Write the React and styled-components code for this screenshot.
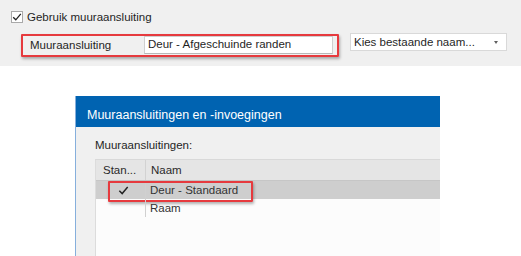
import styled, { createGlobalStyle } from 'styled-components';

const GlobalStyle = createGlobalStyle`
    html, body {
        margin: 0;
        padding: 0;
        background: #fff;
    }
    body {
        font-family: "Liberation Sans", Arial, sans-serif;
        font-size: 11.5px;
        color: #1f1f1f;
    }
`;

const red = '#e63a3e';

function CheckIcon({size = 10}) {
    return (
        <svg width={size} height={size} viewBox="0 0 10 10">
            <path d="M1.2 5.2 L3.8 7.8 L8.8 1.8" fill="none" stroke="#222" strokeWidth="1.3" />
        </svg>
    );
}

function App() {
    const rows = [
        {checked: true, name: 'Deur - Standaard', selected: true},
        {checked: false, name: 'Raam', selected: false},
    ];

    return (
        <Page>
            <GlobalStyle />
            <TopPanel>
                <CheckRow>
                    <CheckBox><CheckIcon /></CheckBox>
                    <span>Gebruik muuraansluiting</span>
                </CheckRow>
                <FieldRow>
                    <Highlight>
                        <FieldLabel>Muuraansluiting</FieldLabel>
                        <TextInput>Deur - Afgeschuinde randen</TextInput>
                    </Highlight>
                    <Select>
                        <span>Kies bestaande naam...</span>
                        <Caret />
                    </Select>
                </FieldRow>
            </TopPanel>

            <Dialog>
                <TitleBar>Muuraansluitingen en -invoegingen</TitleBar>
                <DialogBody>
                    <ListLabel>Muuraansluitingen:</ListLabel>
                    <ListBox>
                        <HeaderRow>
                            <HeadCell first>Stan...</HeadCell>
                            <HeadCell>Naam</HeadCell>
                        </HeaderRow>
                        {rows.map((row) => (
                            <Row key={row.name} selected={row.selected}>
                                <Cell first>{row.checked && <CheckIcon size={11} />}</Cell>
                                <Cell>{row.name}</Cell>
                                {row.selected && <RowMark />}
                            </Row>
                        ))}
                    </ListBox>
                </DialogBody>
            </Dialog>
        </Page>
    );
}

const Page = styled.div`
    width: 521px;
    height: 256px;
    overflow: hidden;
    display: flex;
    flex-direction: column;
`;

const TopPanel = styled.div`
    height: 66px;
    flex-shrink: 0;
    box-sizing: border-box;
    background: #f0f0f0;
    padding: 11px 0 0 11px;
`;

const CheckRow = styled.div`
    display: flex;
    align-items: center;
    gap: 4px;
    height: 12px;
    line-height: 12px;
`;

const CheckBox = styled.div`
    width: 12px;
    height: 12px;
    box-sizing: border-box;
    border: 1px solid #a9a9a9;
    background: #fff;
    display: flex;
    align-items: center;
    justify-content: center;
`;

const FieldRow = styled.div`
    display: flex;
    align-items: flex-start;
    margin: 11px 0 0 10px;
`;

const Highlight = styled.div`
    display: flex;
    align-items: flex-start;
    width: 318px;
    height: 23px;
    box-sizing: border-box;
    border: 2px solid ${red};
    border-radius: 1px;
    box-shadow: 1px 2px 3px rgba(0, 0, 0, .3);
    padding: 0 4px 0 7px;
`;

const FieldLabel = styled.div`
    width: 114px;
    height: 18px;
    line-height: 18px;
`;

const TextInput = styled.div`
    width: 189px;
    height: 18px;
    box-sizing: border-box;
    border: 1px solid #cfcfcf;
    border-bottom-color: #b8b8b8;
    background: #fff;
    padding-left: 3px;
    line-height: 15px;
`;

const Select = styled.div`
    margin: -1px 0 0 11px;
    width: 157px;
    height: 18px;
    box-sizing: border-box;
    border: 1px solid #d9d9d9;
    background: #fff;
    display: flex;
    align-items: center;
    justify-content: space-between;
    padding: 0 8px 0 3px;
    line-height: 15px;
`;

const Caret = styled.div`
    width: 0;
    height: 0;
    border-left: 2.5px solid transparent;
    border-right: 2.5px solid transparent;
    border-top: 3px solid #606060;
`;

const Dialog = styled.div`
    margin: 30px 0 0 75px;
    width: 364px;
    flex: 1;
    display: flex;
    flex-direction: column;
    border-left: 1px solid #86afdc;
`;

const TitleBar = styled.div`
    height: 31px;
    flex-shrink: 0;
    box-sizing: border-box;
    background: #0063b1;
    color: #fff;
    font-size: 12.5px;
    line-height: 15px;
    padding: 12px 0 0 11px;
`;

const DialogBody = styled.div`
    flex: 1;
    display: flex;
    flex-direction: column;
    background: #f0f0f0;
    padding-left: 19px;
`;

const ListLabel = styled.div`
    line-height: 14px;
    margin: 11px 0 7px 0;
`;

const ListBox = styled.div`
    flex: 1;
    background: #fcfcfc;
    border-top: 1px solid #d9d9d9;
    border-left: 1px solid #dcdcdc;
`;

const HeaderRow = styled.div`
    display: flex;
    height: 20px;
    background: #e5e5e5;
    border-bottom: 1px solid #c6c6c6;
`;

const HeadCell = styled.div`
    width: ${({first}) => first ? '50px' : 'auto'};
    flex: ${({first}) => first ? 'none' : '1'};
    border-right: ${({first}) => first ? '1px solid #d2d2d2' : 'none'};
    padding-left: ${({first}) => first ? '7px' : '5px'};
    box-sizing: border-box;
    line-height: 20px;
    color: #2a2a2a;
`;

const Row = styled.div`
    position: relative;
    display: flex;
    height: 18px;
    background: ${({selected}) => selected ? '#cecece' : 'transparent'};
`;

const Cell = styled.div`
    width: ${({first}) => first ? '50px' : 'auto'};
    flex: ${({first}) => first ? 'none' : '1'};
    border-right: ${({first}) => first ? '1px solid #d0d0d0' : 'none'};
    padding-left: ${({first}) => first ? '22px' : '4px'};
    box-sizing: border-box;
    display: flex;
    align-items: center;
    color: #333;
`;

const RowMark = styled.div`
    position: absolute;
    left: 12px;
    top: 0;
    width: 145px;
    height: 21px;
    box-sizing: border-box;
    border: 2px solid ${red};
    border-radius: 1px;
    box-shadow: 1px 2px 3px rgba(0, 0, 0, .3);
`;

export default App;
